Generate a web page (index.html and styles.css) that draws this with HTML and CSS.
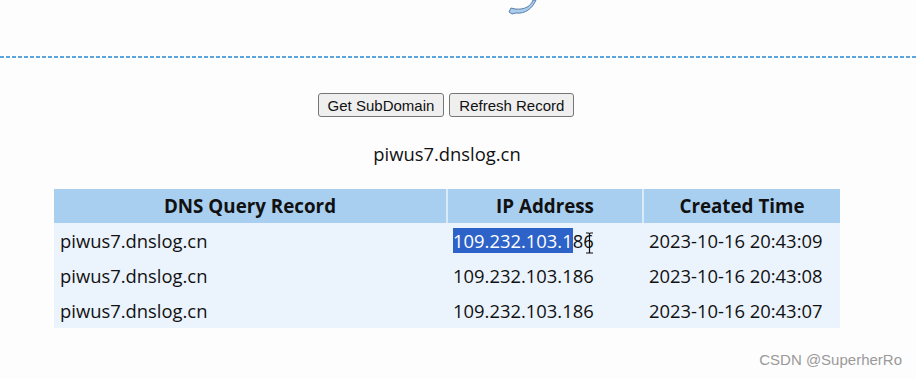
FILE: index.html
```html
<!DOCTYPE html>
<html lang="en">
<head>
  <meta charset="UTF-8">
  <title>DNSLog Platform</title>
  <link rel="stylesheet" href="styles.css">
</head>
<body>

<div class="top">
  <svg class="logo" width="40" height="18" viewBox="0 0 40 18">
    <path d="M30 0 C28 6 22 10 12 9 L8 8 L6 12 L9 14 L13 13 C22 14 29 9 33 0 Z" fill="#a9cdee" stroke="#5b7fa6" stroke-width="1"/>
  </svg>
</div>

<div class="divider"></div>

<div class="controls">
  <button class="btn">Get SubDomain</button>
  <button class="btn">Refresh Record</button>
</div>

<div class="domain">piwus7.dnslog.cn</div>

<table class="records">
  <thead>
    <tr>
      <th class="col-domain">DNS Query Record</th>
      <th class="col-ip">IP Address</th>
      <th class="col-time">Created Time</th>
    </tr>
  </thead>
  <tbody>
    <tr>
      <td>piwus7.dnslog.cn</td>
      <td><span class="selected">109.232.103.1</span>86<svg class="cursor" width="9" height="22" viewBox="0 0 9 22"><path d="M1 1 H3.5 Q4.5 1 4.5 2 V20 Q4.5 21 3.5 21 H1 M8 1 H5.5 Q4.5 1 4.5 2 M4.5 20 Q4.5 21 5.5 21 H8" fill="none" stroke="#111" stroke-width="1.2"/></svg></td>
      <td>2023-10-16 20:43:09</td>
    </tr>
    <tr>
      <td>piwus7.dnslog.cn</td>
      <td>109.232.103.186</td>
      <td>2023-10-16 20:43:08</td>
    </tr>
    <tr>
      <td>piwus7.dnslog.cn</td>
      <td>109.232.103.186</td>
      <td>2023-10-16 20:43:07</td>
    </tr>
  </tbody>
</table>

<div class="watermark">CSDN @SuperherRo</div>

</body>
</html>
```

FILE: styles.css
```css
body {
  margin: 0;
  background-color: #fdfdfd;
  font-family: 'Open Sans', sans-serif;
  color: #111;
  height: 379px;
  position: relative;
  overflow: hidden;
}
.top {
  height: 56px;
  display: flex;
  justify-content: center;
}
.logo {
  margin-left: 130px;
}
.divider {
  height: 2px;
  background: repeating-linear-gradient(90deg, #5aa5dd 0 4px, transparent 4px 6px);
}
.controls {
  margin-top: 35px;
  display: flex;
  justify-content: center;
  gap: 5px;
  padding-right: 24px;
}
.btn {
  font-family: 'Liberation Sans', Arial, sans-serif;
  font-size: 15px;
  color: #111;
  background-color: #efefef;
  border: 1px solid #767676;
  border-radius: 3px;
  padding: 1px 9px;
  height: 24px;
}
.domain {
  margin-top: 24px;
  text-align: center;
  font-size: 18.4px;
  padding-right: 22px;
}
.records {
  margin: 23px 0 0 54px;
  width: 786px;
  border-collapse: collapse;
  font-size: 18.4px;
}
.records th {
  background-color: #a8cff0;
  height: 34px;
  font-size: 18.8px;
  font-weight: bold;
  text-align: center;
  border-left: 2px solid #dbeaf7;
  padding: 0;
}
.records th:first-child {
  border-left: none;
}
.col-domain {
  width: 392px;
}
.col-ip {
  width: 194px;
}
.records td {
  background-color: #ebf3fd;
  height: 35px;
  padding: 0 6px;
}
.selected {
  background-color: #2d62c8;
  color: #fff;
}
.cursor {
  position: absolute;
  margin-left: -9px;
  margin-top: 4px;
}
.watermark {
  position: absolute;
  right: 14px;
  bottom: 11px;
  font-family: 'Liberation Sans', Arial, sans-serif;
  font-size: 15px;
  color: #9a9a9a;
}
```
